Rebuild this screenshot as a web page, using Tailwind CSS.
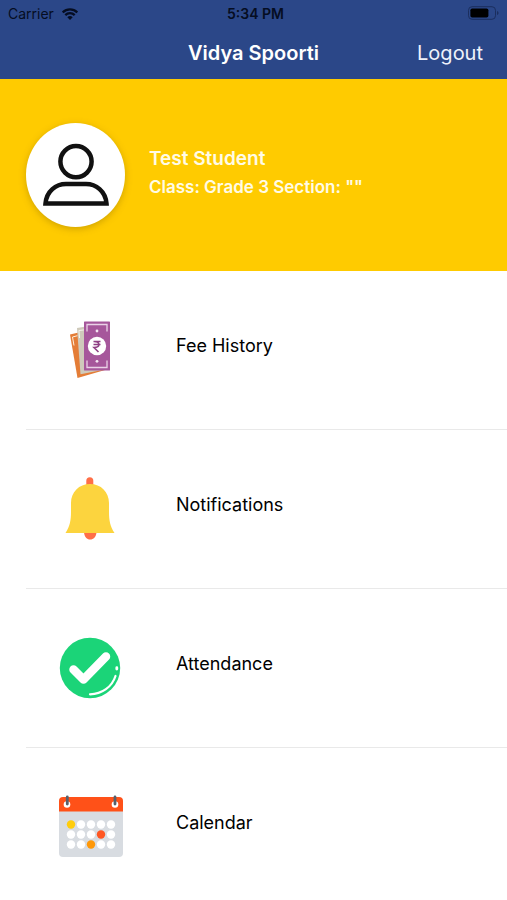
<!DOCTYPE html>
<html lang="en">
<head>
<meta charset="utf-8">
<meta name="viewport" content="width=device-width, initial-scale=1">
<title>Vidya Spoorti</title>
<script src="https://cdn.jsdelivr.net/npm/@tailwindcss/browser@4"></script>
</head>
<body class="bg-white font-['Inter','Liberation_Sans',sans-serif] text-black">
<div class="flex min-h-screen flex-col">
  <header class="bg-[#2b4788]">
    <div class="grid h-7 grid-cols-[1fr_auto_1fr] items-center pl-2 pr-2 text-sm text-[#050d22]">
      <div class="flex items-center gap-2">
        <span>Carrier</span>
        <svg class="h-3 w-4" viewBox="0 0 16 12" fill="none" stroke="#050d22" stroke-width="2.3" aria-hidden="true">
          <path d="M.7 4.4a10.4 10.4 0 0 1 14.6 0"/>
          <path d="M3.3 7.1a6.7 6.7 0 0 1 9.4 0"/>
          <path d="M8 12 5.3 9.2a3.9 3.9 0 0 1 5.4 0z" fill="#050d22" stroke="none"/>
        </svg>
      </div>
      <span class="pl-1 text-sm font-semibold">5:34 PM</span>
      <svg class="h-4 w-8 justify-self-end" viewBox="0 0 32 16" aria-hidden="true">
        <rect x="1.500" y=".7" width="27" height="12.600" rx="3.6" fill="none" stroke="#1b2e5e"/>
        <rect x="3.400" y="2.500" width="18" height="9" rx="1.8" fill="#000"/>
        <path d="M30 4.900q1.600.6 1.600 2.100T30 9.100z" fill="#1b2e5e"/>
      </svg>
    </div>
    <div class="grid h-[51px] grid-cols-[1fr_auto_1fr] items-center pr-6 pb-[2px] pl-6">
      <h1 class="col-start-2 text-xl font-semibold text-white">Vidya Spoorti</h1>
      <button type="button" class="justify-self-end text-xl text-[#eef2fb]">Logout</button>
    </div>
  </header>

  <section class="flex h-48 items-center gap-6 bg-[#ffcb00] pl-[26px]">
    <div class="flex h-[104px] w-[99px] shrink-0 items-center justify-center rounded-[50%] bg-white shadow-[0_2px_7px_rgba(120,90,0,0.35)]">
      <svg class="h-16 w-[66px]" viewBox="0 0 66 64" fill="none" stroke="#111" stroke-width="4.500" aria-hidden="true">
        <circle cx="33" cy="18.600" r="15.600"/>
        <path d="M2.500 60.500h61C62.500 48 53 41 43 41H23C13 41 3.500 48 2.500 60.500z"/>
      </svg>
    </div>
    <div class="pb-1 font-semibold text-[#fffbe6]">
      <h2 class="text-[19px] leading-7">Test Student</h2>
      <p class="text-[17px] leading-7">Class: Grade 3 Section: ""</p>
    </div>
  </section>

  <nav aria-label="Main menu" class="pl-[26px]">
    <ul>
      <li class="border-b border-[#e9e9e9]">
        <a href="#fees" class="flex h-[158px] items-center gap-[46px] pl-6">
          <svg class="size-20 shrink-0" viewBox="0 0 80 80" aria-hidden="true">
            <path d="M20 24.500 35 21l20 39-27.500 8z" fill="#e47d37"/>
            <path d="M24 35.500 22.500 27l5-1.300" fill="none" stroke="#fff0dc" stroke-width="1"/>
            <path d="M27 18l9-1.500L55 59.500l-24.500 4.800z" fill="#cfcabb"/>
            <path d="M29.500 28l-.6-7.500 5-.6" fill="none" stroke="#f8f6ed" stroke-width="1"/>
            <rect x="34" y="11.500" width="26" height="49" rx=".6" fill="#a6579b"/>
            <path d="M37 21.500v-7h20v7M37 50.500v7h20v-7" fill="none" stroke="#ead2e7" stroke-width="1.300"/>
            <circle cx="47" cy="36" r="9.200" fill="#fff"/>
            <circle cx="47" cy="21" r="1.400" fill="#f4e6f2"/>
            <circle cx="47" cy="51.300" r="1.400" fill="#f4e6f2"/>
            <path d="M43.500 31.500h7M43.500 34.500h7M44 31.500c6.500 0 6.500 6 0 6l4.500 4.500" fill="none" stroke="#8e3f83" stroke-width="1.600"/>
          </svg>
          <span class="pb-2 text-lg">Fee History</span>
        </a>
      </li>
      <li class="border-b border-[#e9e9e9]">
        <a href="#notifications" class="flex h-[158px] items-center gap-[46px] pl-6">
          <svg class="size-20 shrink-0" viewBox="0 0 80 80" aria-hidden="true">
            <path d="M36.300 16.500v-4.700a3.500 3.500 0 0 1 7 0v4.700zM34 63.500h12.500c-.5 4.500-3 7-6.300 7s-5.700-2.500-6.200-7z" fill="#ff6f47"/>
            <path d="M15.500 64C20 57 21 51 21 43v-9c0-11 8-19 19-19s19 8 19 19v9c0 8 1 14 5.500 21z" fill="#fcd43e"/>
          </svg>
          <span class="pb-2 text-lg">Notifications</span>
        </a>
      </li>
      <li class="border-b border-[#e9e9e9]">
        <a href="#attendance" class="flex h-[158px] items-center gap-[46px] pl-6">
          <svg class="size-20 shrink-0" viewBox="0 0 80 80" fill="none" stroke="#fff" stroke-linecap="round" aria-hidden="true">
            <circle cx="40" cy="40" r="30.200" fill="#1bd478" stroke="none"/>
            <path d="M23.500 41.500 33.500 51.500 56 28.500" stroke-width="8.500" stroke-linejoin="round"/>
            <path d="M40 66.300C52 66 62 59 65.500 48" stroke-width="2.200"/>
            <path d="M66.800 39.700v1.300" stroke-width="2.800"/>
          </svg>
          <span class="pb-2 text-lg">Attendance</span>
        </a>
      </li>
      <li>
        <a href="#calendar" class="flex h-[158px] items-center gap-[46px] pl-6">
          <svg class="size-20 shrink-0" viewBox="0 1 80 80" aria-hidden="true">
            <rect x="9" y="12" width="64" height="59" rx="4" fill="#d8dce1"/>
            <path d="M9 25.500V15a4 4 0 0 1 4-4h56a4 4 0 0 1 4 4v10.500z" fill="#ff5118"/>
            <g fill="#fff">
              <circle cx="17" cy="18.500" r="3.300"/><circle cx="65" cy="18.500" r="3.300"/>
              <circle cx="31" cy="38.500" r="4.200"/><circle cx="41" cy="38.500" r="4.200"/><circle cx="51" cy="38.500" r="4.200"/><circle cx="61" cy="38.500" r="4.200"/>
              <circle cx="21" cy="48.500" r="4.200"/><circle cx="31" cy="48.500" r="4.200"/><circle cx="41" cy="48.500" r="4.200"/><circle cx="61" cy="48.500" r="4.200"/>
              <circle cx="21" cy="58.500" r="4.200"/><circle cx="31" cy="58.500" r="4.200"/><circle cx="51" cy="58.500" r="4.200"/><circle cx="61" cy="58.500" r="4.200"/>
            </g>
            <circle cx="21" cy="38.500" r="4.200" fill="#ffcd0c"/>
            <circle cx="51" cy="48.500" r="4.200" fill="#ff5722"/>
            <circle cx="41" cy="58.500" r="4.200" fill="#ff9808"/>
            <path d="M17.300 11v7M65 11v7" stroke="#56606c" stroke-width="2.800" stroke-linecap="round"/>
          </svg>
          <span class="pb-2 text-lg">Calendar</span>
        </a>
      </li>
    </ul>
  </nav>
</div>
</body>
</html>
